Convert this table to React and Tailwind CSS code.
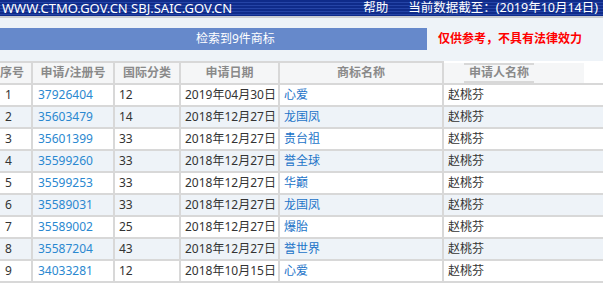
const rows = [
  ['1', '37926404', '12', '2019年04月30日', '心爱', '赵桃芬'],
  ['2', '35603479', '14', '2018年12月27日', '龙国凤', '赵桃芬'],
  ['3', '35601399', '33', '2018年12月27日', '贵台祖', '赵桃芬'],
  ['4', '35599260', '33', '2018年12月27日', '誉全球', '赵桃芬'],
  ['5', '35599253', '33', '2018年12月27日', '华巅', '赵桃芬'],
  ['6', '35589031', '33', '2018年12月27日', '龙国凤', '赵桃芬'],
  ['7', '35589002', '25', '2018年12月27日', '爆胎', '赵桃芬'],
  ['8', '35587204', '43', '2018年12月27日', '誉世界', '赵桃芬'],
  ['9', '34033281', '12', '2018年10月15日', '心爱', '赵桃芬'],
];

const font = { fontFamily: '"Noto Sans", "Noto Sans CJK SC", sans-serif' };

export default function App() {
  return (
    <div className="w-[603px] h-[288px] overflow-hidden bg-white text-[12px]" style={font}>
      {/* top strip */}
      <div className="h-[16px] flex items-center justify-between bg-[repeating-linear-gradient(180deg,#0f2b8a_0px,#0f2b8a_2px,#2544a6_2px,#2544a6_3px)] text-white text-[13px] leading-none">
        <span className="pl-[2px]">WWW.CTMO.GOV.CN SBJ.SAIC.GOV.CN</span>
        <span className="flex gap-[20px] pr-[5px] text-[12.5px]">
          <span>帮助</span>
          <span>当前数据截至：(2019年10月14日)</span>
        </span>
      </div>
      <div className="h-[2px] bg-[#c9ccd1]" />
      <div className="bg-[#eef3f8] pt-[10px] pb-[11px] flex items-center">
        <div className="w-[427px] h-[22px] bg-[#6689cb] text-white flex items-center pl-[196px] leading-none">
          检索到9件商标
        </div>
        <div className="ml-[11px] text-[#ff0000] font-bold leading-none">仅供参考，不具有法律效力</div>
      </div>

      <table className="border-collapse table-fixed w-[603px] leading-none">
        <colgroup>
          <col className="w-[32px]" />
          <col className="w-[82px]" />
          <col className="w-[66px]" />
          <col className="w-[99px]" />
          <col className="w-[164px]" />
          <col />
        </colgroup>
        <thead>
          <tr className="h-[22px] text-[#8a8a8a]">
            <th className="bg-[#f5f6f7] border-y-2 border-r-2 border-[#d8d8d8] font-bold text-left pl-0">序号</th>
            <th className="bg-[#f5f6f7] border-y-2 border-r-2 border-[#d8d8d8] font-bold">申请/注册号</th>
            <th className="bg-[#f5f6f7] border-y-2 border-r-2 border-[#d8d8d8] font-bold">国际分类</th>
            <th className="bg-[#f5f6f7] border-y-2 border-r-2 border-[#d8d8d8] font-bold">申请日期</th>
            <th className="bg-[#f5f6f7] border-y-2 border-r-2 border-[#d8d8d8] font-bold">商标名称</th>
            <th className="p-0 border-b-2 border-[#d8d8d8] font-bold">
              <div className="w-[140px] h-[20px] bg-[#f5f6f7] flex items-center pl-[20px]">
                <span className="w-[70px] h-[20px] flex items-center justify-center border-y-2 border-[#d8d8d8]">申请人名称</span>
              </div>
            </th>
          </tr>
        </thead>
        <tbody>
          {rows.map((r, i) => (
            <tr key={r[0]} className={`h-[22px] ${i % 2 === 1 ? 'bg-[#eef3f8]' : 'bg-white'}`}>
              <td className="border-b-2 border-r-2 border-[#d8d8d8] pl-[5px] text-[#333]">{r[0]}</td>
              <td className="border-b-2 border-r-2 border-[#d8d8d8] pl-[5px] text-[#2a88d0]">{r[1]}</td>
              <td className="border-b-2 border-r-2 border-[#d8d8d8] pl-[4px] text-[#333]">{r[2]}</td>
              <td className="border-b-2 border-r-2 border-[#d8d8d8] pl-[4px] text-[#333] whitespace-nowrap">{r[3]}</td>
              <td className="border-b-2 border-r-2 border-[#d8d8d8] pl-[4px] text-[#1c74c8]">{r[4]}</td>
              <td className="border-b-2 border-[#d8d8d8] pl-[4px] text-[#333]">{r[5]}</td>
            </tr>
          ))}
        </tbody>
      </table>
    </div>
  );
}
